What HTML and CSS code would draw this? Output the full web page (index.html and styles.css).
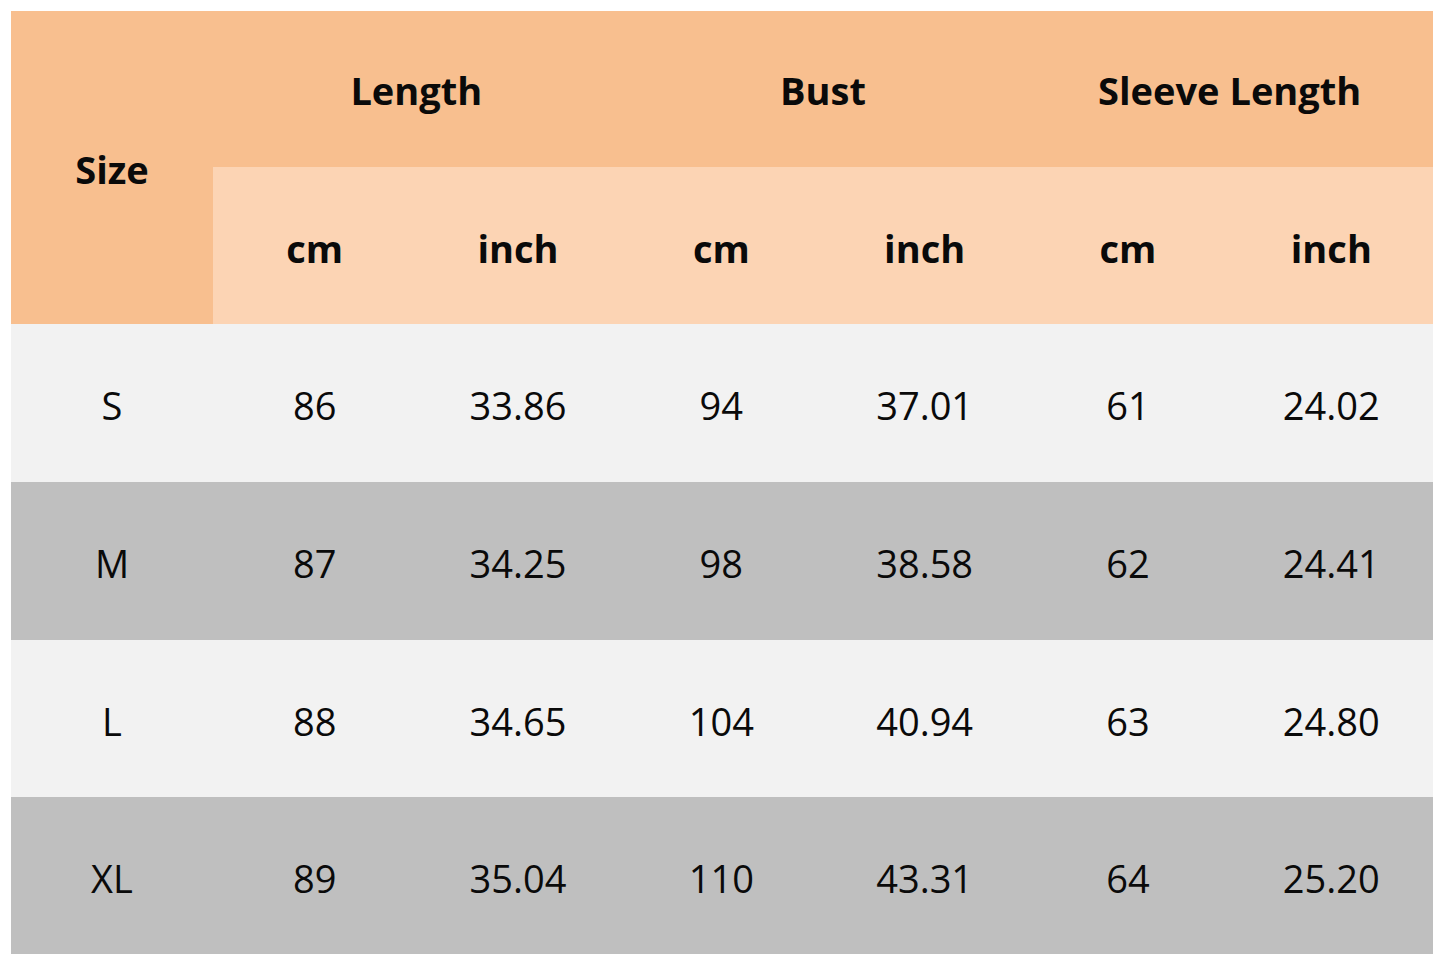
FILE: index.html
```html
<!DOCTYPE html>
<html>
<head>
<meta charset="utf-8">
<link rel="stylesheet" href="styles.css">
</head>
<body>
<div class="chart">
  <div class="cell hd size">Size</div>
  <div class="cell hd group">Length</div>
  <div class="cell hd group">Bust</div>
  <div class="cell hd group">Sleeve Length</div>
  <div class="cell sub">cm</div>
  <div class="cell sub">inch</div>
  <div class="cell sub">cm</div>
  <div class="cell sub">inch</div>
  <div class="cell sub">cm</div>
  <div class="cell sub">inch</div>

  <div class="cell light">S</div><div class="cell light">86</div><div class="cell light">33.86</div><div class="cell light">94</div><div class="cell light">37.01</div><div class="cell light">61</div><div class="cell light">24.02</div>
  <div class="cell dark">M</div><div class="cell dark">87</div><div class="cell dark">34.25</div><div class="cell dark">98</div><div class="cell dark">38.58</div><div class="cell dark">62</div><div class="cell dark">24.41</div>
  <div class="cell light">L</div><div class="cell light">88</div><div class="cell light">34.65</div><div class="cell light">104</div><div class="cell light">40.94</div><div class="cell light">63</div><div class="cell light">24.80</div>
  <div class="cell dark">XL</div><div class="cell dark">89</div><div class="cell dark">35.04</div><div class="cell dark">110</div><div class="cell dark">43.31</div><div class="cell dark">64</div><div class="cell dark">25.20</div>
</div>
</body>
</html>
```
FILE: styles.css
```css
html, body {
  margin: 0;
  padding: 0;
  background: #ffffff;
}
body {
  padding: 11px 0 0 11px;
  font-family: "Open Sans", "Noto Sans", sans-serif;
  color: #0a0a0a;
}
.chart {
  display: grid;
  width: 1422px;
  grid-template-columns: 202px repeat(6, 1fr);
  grid-template-rows: 156px 157px 158px 158px 157px 157px;
}
.cell {
  display: flex;
  align-items: center;
  justify-content: center;
  font-size: 38px;
  line-height: 1;
  padding-top: 4px;
}
.hd {
  background: #f8bf8f;
  font-weight: 700;
  padding-top: 2px;
}
.size {
  grid-row: span 2;
}
.group {
  grid-column: span 2;
}
.sub {
  background: #fcd4b4;
  font-weight: 700;
}
.light {
  background: #f2f2f2;
}
.dark {
  background: #bfbfbf;
}
```
